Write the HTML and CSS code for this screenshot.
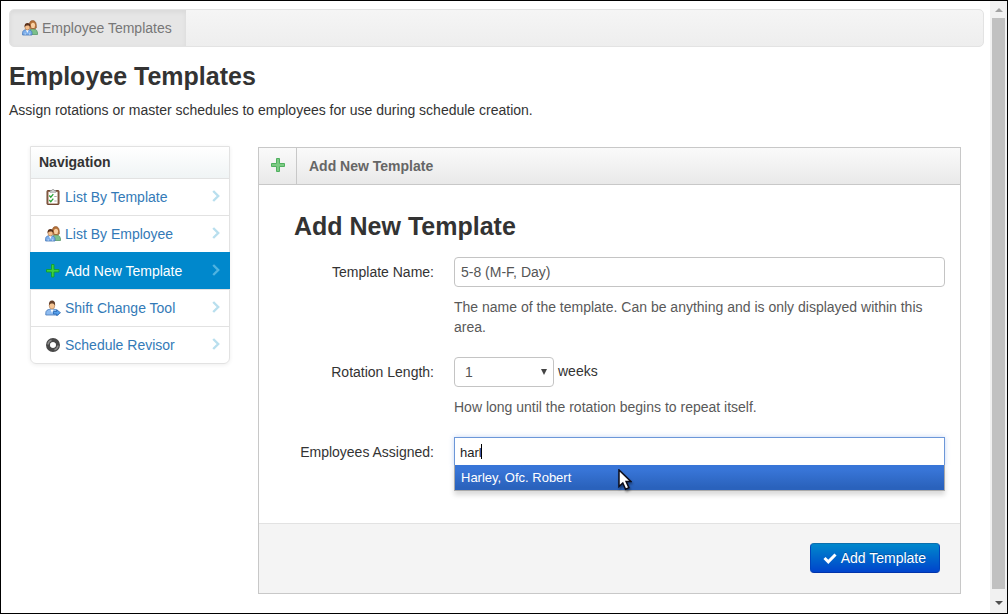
FILE: index.html
```html
<!DOCTYPE html>
<html lang="en">
<head>
  <meta charset="UTF-8">
  <meta name="viewport" content="width=device-width, initial-scale=1.0">
  <title>Employee Templates</title>
  <link rel="stylesheet" href="styles.css">
</head>
<body>
  <!-- Shared icons -->
  <svg class="sprite" aria-hidden="true">
    <symbol id="icon-group" viewBox="0 0 16 16">
      <path d="M8 14.500V11c0-1.500 1-2.500 2.500-2.500s4.500.6 5 4.500v1.500z" fill="#7cc08a" stroke="#4d9160" stroke-width=".7"/>
      <path d="M7.500 7.500C6.800 2.500 8.300.6 10.700.6s4 2 3.600 7.400l-1.500.8H8.800z" fill="#b5723a" stroke="#8c5328" stroke-width=".6"/>
      <ellipse cx="11" cy="5.400" rx="2.100" ry="2.700" fill="#f9cfa1"/>
      <path d="M.6 15v-2.300c0-1.600 1.200-2.700 3-2.900h3.200c2 .2 3.200 1.400 3.200 3V15z" fill="#7fb0ec" stroke="#4577b8" stroke-width=".8"/>
      <path d="M4 10l1.300 3 1.300-3z" fill="#fff"/>
      <path d="M3.200 13v2M7.700 13v2" stroke="#dceafb" stroke-width=".6"/>
      <ellipse cx="5.400" cy="7" rx="2.500" ry="3" fill="#f5bf8c" stroke="#9b653a" stroke-width=".5"/>
      <path d="M2.600 7.300C2.200 4.500 3.500 3 5.500 3s3.300 1.400 2.800 4.200C7.700 5.700 7 5.500 5.900 5.400 4.600 5.500 3.400 5.500 2.600 7.300z" fill="#5b321c"/>
    </symbol>
    <symbol id="icon-list" viewBox="0 0 16 16">
      <rect x="2" y="1.500" width="12" height="14" rx=".7" fill="#94694f" stroke="#6f4630"/>
      <rect x="3.500" y="3" width="9" height="11.500" fill="#fff"/>
      <path d="M5 3.200V1.500h1.500C6.600.3 9.400.3 9.500 1.500H11v1.700z" fill="#ddd" stroke="#888" stroke-width=".7"/>
      <path d="M4.300 6.500l1.500 1.700L8.300 5.200M4.300 11l1.500 1.700L8.300 9.700" fill="none" stroke="#29a336" stroke-width="1.300"/>
      <path d="M9.300 7.500h2.400M9.300 12h2.400" stroke="#aaa"/>
    </symbol>
    <symbol id="icon-add" viewBox="0 0 16 16">
      <path d="M6.500 1.500h2.500v5h5v2.500H9v5H6.500V9h-5V6.500h5z" fill="#3fd03f" stroke="#12a02c" stroke-width=".9"/>
    </symbol>
    <symbol id="icon-user-go" viewBox="0 0 16 16">
      <path d="M.8 15v-2.300c0-2 1.800-3.200 4-3.400h4.400c2.400.2 4 1.500 4 3.500V15z" fill="#8fbcf0" stroke="#4577b8" stroke-width=".8"/>
      <path d="M5.500 9.500L7 13l1.500-3.500z" fill="#fff"/>
      <ellipse cx="7" cy="5.500" rx="2.800" ry="3.500" fill="#f5c493" stroke="#9b653a" stroke-width=".5"/>
      <path d="M4 5.500C3.500 2.200 5 .6 7 .6s3.600 1.500 3 4.900C9.400 4 8.500 3.400 7 3.400S4.600 4 4 5.500z" fill="#65402a"/>
      <path d="M8.500 11.500h3.200V9.700l3.800 3-3.800 3V14H8.500z" fill="#57a1ed" stroke="#1f5eaa" stroke-width=".7"/>
    </symbol>
    <symbol id="icon-revisor" viewBox="0 0 16 16">
      <circle cx="8" cy="8" r="4.900" fill="none" stroke="#484848" stroke-width="4.200"/>
      <path d="M3 7.500A5 5 0 0 1 6.500 3.300M13 8.500A5 5 0 0 1 9.500 12.700" fill="none" stroke="#8c8c8c" stroke-width="1.600"/>
      <circle cx="8" cy="8" r="2.800" fill="#fff"/>
    </symbol>
    <symbol id="icon-chevron" viewBox="0 0 8 12">
      <path d="M1.200 1l5 5-5 5" fill="none" stroke="currentColor" stroke-width="2.400"/>
    </symbol>
  </svg>

  <div class="window">
    <main class="page">
      <nav class="breadcrumb">
        <a href="#" class="crumb"><svg class="icon"><use href="#icon-group"/></svg>Employee Templates</a>
      </nav>

      <h1>Employee Templates</h1>
      <p class="intro">Assign rotations or master schedules to employees for use during schedule creation.</p>

      <div class="columns">
        <nav class="side-nav">
          <h2 class="side-title">Navigation</h2>
          <a href="#" class="side-link"><svg class="icon"><use href="#icon-list"/></svg>List By Template<svg class="chevron"><use href="#icon-chevron"/></svg></a>
          <a href="#" class="side-link"><svg class="icon"><use href="#icon-group"/></svg>List By Employee<svg class="chevron"><use href="#icon-chevron"/></svg></a>
          <a href="#" class="side-link active"><svg class="icon"><use href="#icon-add"/></svg>Add New Template<svg class="chevron"><use href="#icon-chevron"/></svg></a>
          <a href="#" class="side-link"><svg class="icon"><use href="#icon-user-go"/></svg>Shift Change Tool<svg class="chevron"><use href="#icon-chevron"/></svg></a>
          <a href="#" class="side-link"><svg class="icon"><use href="#icon-revisor"/></svg>Schedule Revisor<svg class="chevron"><use href="#icon-chevron"/></svg></a>
        </nav>

        <form class="widget">
          <div class="widget-title">
            <span class="widget-icon">
              <svg width="16" height="16" viewBox="0 0 16 16"><path d="M6.500 1.500h3v5h5v3h-5v5h-3v-5h-5v-3h5z" fill="#7cca83" stroke="#50b060"/></svg>
            </span>
            <h2>Add New Template</h2>
          </div>

          <div class="widget-body">
            <h3>Add New Template</h3>

            <div class="row">
              <label for="name">Template Name:</label>
              <div class="field">
                <input type="text" id="name" class="text-input" value="5-8 (M-F, Day)">
                <p class="help">The name of the template. Can be anything and is only displayed within this area.</p>
              </div>
            </div>

            <div class="row">
              <label for="weeks">Rotation Length:</label>
              <div class="field">
                <div class="inline">
                  <span class="select-wrap">
                    <select id="weeks">
                      <option>1</option>
                      <option>2</option>
                      <option>3</option>
                      <option>4</option>
                    </select>
                    <svg class="arrow" viewBox="0 0 6 6"><path d="M0 0h6L3 6z" fill="#444"/></svg>
                  </span>
                  weeks
                </div>
                <p class="help">How long until the rotation begins to repeat itself.</p>
              </div>
            </div>

            <div class="row">
              <label for="employees">Employees Assigned:</label>
              <div class="field chosen">
                <input type="text" id="employees" class="chosen-input" value="harl" autocomplete="off">
                <span class="caret"></span>
                <ul class="chosen-results">
                  <li>Harley, Ofc. Robert</li>
                </ul>
                <svg class="pointer" viewBox="0 0 14 22"><path d="M1 1v16.500l3.800-3.600 2.800 6.300 3.300-1.500-2.800-6.100h5z" fill="#fff" stroke="#0b0b18" stroke-width="1.500"/></svg>
              </div>
            </div>
          </div>

          <div class="actions">
            <button type="button" class="btn">
              <svg width="14" height="12" viewBox="0 0 14 12"><path d="M1.500 6l3.800 3.800L12.500 2.500" fill="none" stroke="#fff" stroke-width="3"/></svg>
              Add Template
            </button>
          </div>
        </form>
      </div>
    </main>

    <div class="scrollbar" aria-hidden="true">
      <svg class="scroll-arrow" viewBox="0 0 8 4"><path d="M0 4l4-4 4 4z" fill="#a3a3a3"/></svg>
      <div class="thumb"></div>
      <svg class="scroll-arrow" viewBox="0 0 8 4"><path d="M0 0h8L4 4z" fill="#505050"/></svg>
    </div>
  </div>
</body>
</html>
```
FILE: styles.css
```css
* {
  box-sizing: border-box;
}
body {
  margin: 0;
  font-family: "Liberation Sans", Arial, sans-serif;
  font-size: 14px;
  line-height: 20px;
  color: #333;
  background: #fff;
}
h1, h2, h3, p, ul {
  margin: 0;
  padding: 0;
}
a {
  text-decoration: none;
}
input, select, button {
  font: inherit;
}
.sprite {
  display: none;
}
.window {
  display: flex;
  min-height: 100vh;
  border: 1px solid #000;
}
.page {
  flex: 1;
  padding: 8px 6px 19px 8px;
}
.icon {
  width: 16px;
  height: 16px;
  flex: none;
}

/* Breadcrumb */
.breadcrumb {
  display: flex;
  height: 38px;
  border: 1px solid #e3e3e3;
  border-radius: 5px;
  background: linear-gradient(#f5f5f5, #eee);
  overflow: hidden;
}
.crumb {
  display: flex;
  align-items: center;
  gap: 4px;
  padding: 0 14px 0 12px;
  color: #777;
  background: #e6e6e6;
  box-shadow: inset 0 2px 5px rgba(0,0,0,0.06);
}

h1, h3 {
  font-size: 25px;
  line-height: 40px;
}
h1 {
  margin-top: 9px;
}
.intro {
  margin-top: 4px;
}
.columns {
  display: flex;
  align-items: flex-start;
  gap: 28px;
  margin: 26px 23px 0 21px;
}

/* Left navigation */
.side-nav {
  flex: none;
  width: 200px;
  border: 1px solid #e2e2e2;
  border-radius: 0 0 6px 6px;
  box-shadow: 0 1px 4px rgba(0,0,0,0.07);
}
.side-title {
  padding: 5px 8px 6px;
  font-size: 14px;
  background: linear-gradient(#fff, #f0f4f5);
}
.side-link {
  display: flex;
  align-items: center;
  gap: 4px;
  height: 37px;
  padding: 0 9px 0 14px;
  color: #337ab7;
  border-top: 1px solid #e2e2e2;
}
.side-link.active {
  margin: 0 -1px;
  padding: 0 10px 0 15px;
  color: #fff;
  background: #08c;
  border-color: #08c;
}
.chevron {
  width: 8px;
  height: 12px;
  margin: 0 0 2px auto;
  color: #b9dfee;
}
.active .chevron {
  color: #4fb3e0;
}

/* Form widget */
.widget {
  flex: 1;
  margin-top: 1px;
  border: 1px solid #c8c8c8;
}
.widget-title {
  display: flex;
  height: 37px;
  background: linear-gradient(#fafafa, #e9e9e9);
  border-bottom: 1px solid #c8c8c8;
}
.widget-title h2 {
  padding: 8px 12px;
  font-size: 14px;
  color: #666;
}
.widget-icon {
  padding: 9px 10px 0 11px;
  border-right: 1px solid #c8c8c8;
}
.widget-body {
  padding: 21px 15px 32px 35px;
}
.row {
  display: flex;
  gap: 20px;
  margin-bottom: 20px;
}
h3 {
  margin-bottom: 11px;
}
.row:last-child {
  margin-bottom: 0;
}
.row label {
  width: 140px;
  padding-top: 5px;
  text-align: right;
}
.field {
  flex: 1;
}
.text-input, select {
  display: block;
  width: 100%;
  height: 30px;
  padding: 4px 6px;
  color: #555;
  background: #fff;
  border: 1px solid #c4c4c4;
  border-radius: 4px;
}
.help {
  margin-top: 10px;
  color: #595959;
}
.inline {
  display: flex;
  gap: 4px;
  height: 30px;
  line-height: 28px;
}
.select-wrap {
  position: relative;
  width: 100px;
}
select {
  appearance: none;
  padding-left: 10px;
  line-height: 20px;
}
.arrow {
  position: absolute;
  top: 12px;
  right: 7px;
  width: 6px;
  height: 6px;
}

/* Employee picker */
.chosen {
  position: relative;
  height: 54px;
}
.chosen-input {
  display: block;
  width: 100%;
  height: 30px;
  padding: 4px 5px;
  font-size: 13px;
  color: #222;
  border: 1px solid #6c97d8;
  box-shadow: 0 0 5px rgba(60,120,230,0.3);
  outline: none;
}
.caret {
  position: absolute;
  top: 7px;
  left: 27px;
  width: 1px;
  height: 15px;
  background: #000;
}
.chosen-results {
  position: absolute;
  top: 28px;
  left: 0;
  right: 0;
  list-style: none;
  border: 1px solid #aaa;
  border-top: 0;
  box-shadow: 0 4px 5px rgba(0,0,0,0.15);
}
.chosen-results li {
  padding: 3px 6px 2px;
  font-size: 13px;
  color: #fff;
  background: linear-gradient(#3875d7 20%, #2a62bc 90%);
}
.pointer {
  position: absolute;
  top: 32px;
  left: 164px;
  width: 14px;
  height: 22px;
  filter: drop-shadow(1px 2px 1px rgba(0,0,0,0.4));
}

/* Footer */
.actions {
  display: flex;
  justify-content: flex-end;
  padding: 19px 20px 20px;
  background: #f4f4f4;
  border-top: 1px solid #e2e2e2;
}
.btn {
  display: flex;
  align-items: center;
  gap: 4px;
  height: 30px;
  padding: 0 13px 0 12px;
  color: #fff;
  text-shadow: 0 -1px 0 rgba(0,0,0,0.25);
  background: linear-gradient(#08c, #04c);
  border: 1px solid;
  border-color: #0a6fae #04b #03a;
  border-radius: 4px;
}

/* Scrollbar */
.scrollbar {
  display: flex;
  flex-direction: column;
  align-items: center;
  width: 17px;
  background: #f1f1f1;
}
.thumb {
  flex: 1;
  width: 13px;
  background: #c1c1c1;
}
.scroll-arrow {
  width: 8px;
  height: 4px;
  margin: 7px 0 6px;
}
.thumb + .scroll-arrow {
  margin: 12px 0 8px;
}
```
